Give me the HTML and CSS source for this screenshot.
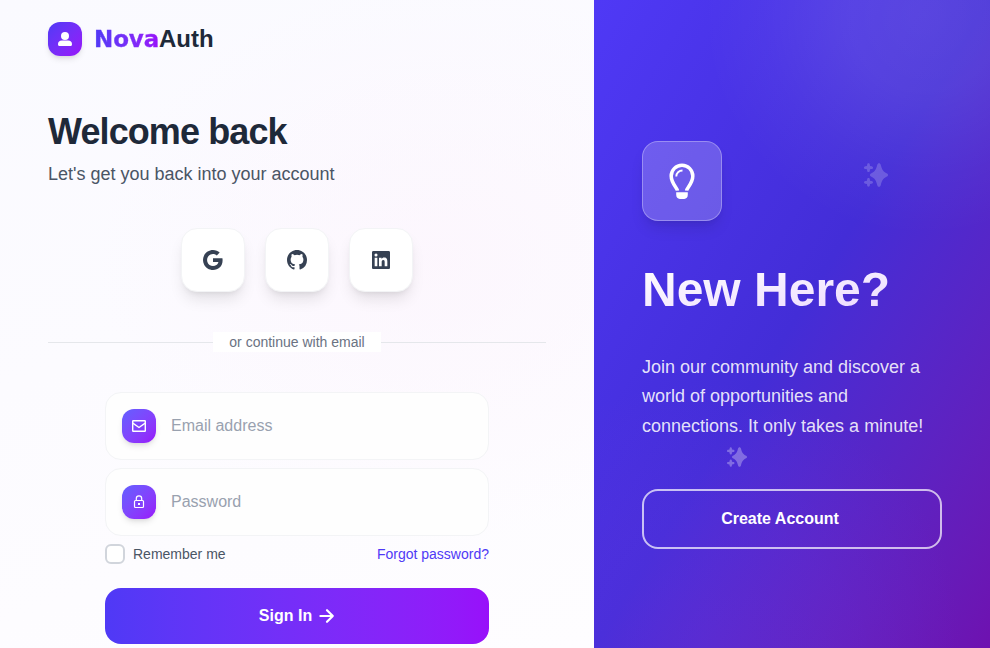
FILE: index.html
```html
<!DOCTYPE html>
<html lang="en">
<head>
<meta charset="utf-8">
<title>NovaAuth</title>
<link rel="stylesheet" href="styles.css">
</head>
<body>
<main class="page">
  <section class="login">
    <header class="brand">
      <span class="badge"><svg width="16" height="16" viewBox="0 0 16 16" fill="currentColor"><circle cx="8" cy="5" r="4"/><path d="M1 13.200C1 11 2.600 9.600 4.800 9.600h6.400c2.200 0 3.800 1.400 3.800 3.600 0 1.200-.5 1.800-1.600 1.800H2.600C1.500 15 1 14.400 1 13.200z"/></svg></span>
      <span class="wordmark"><span class="nova">Nova</span><span>Auth</span></span>
    </header>
    <h1>Welcome back</h1>
    <p class="subtitle">Let's get you back into your account</p>
    <div class="socials">
      <button aria-label="Google"><svg width="24" height="24" viewBox="0 0 24 24" fill="currentColor"><path d="M3.064 7.509C4.709 4.241 8.091 2 12 2c2.695 0 4.959.991 6.691 2.605l-2.868 2.868C14.786 6.482 13.468 5.977 12 5.977c-2.605 0-4.809 1.759-5.595 4.123-.2.600-.314 1.241-.314 1.900s.114 1.300.314 1.900c.786 2.364 2.990 4.123 5.595 4.123 1.345 0 2.491-.355 3.386-.955 1.060-.709 1.764-1.768 1.996-3.018H12v-3.868h9.418c.118.654.182 1.336.182 2.045 0 3.046-1.091 5.609-2.982 7.350C16.964 21.105 14.700 22 12 22c-3.909 0-7.291-2.241-8.936-5.509C2.386 15.141 2 13.614 2 12s.386-3.141 1.064-4.491z"/></svg></button>
      <button aria-label="GitHub"><svg width="24" height="24" viewBox="0 0 24 24" fill="currentColor"><path d="M12 2C6.475 2 2 6.475 2 12c0 4.425 2.862 8.162 6.838 9.487.5.088.687-.212.687-.475 0-.237-.012-1.025-.012-1.862C7 19.612 6.350 18.537 6.150 17.975c-.113-.288-.6-1.175-1.025-1.413-.35-.187-.85-.65-.012-.662.787-.012 1.350.725 1.537 1.025.9 1.512 2.338 1.087 2.912.825.088-.65.350-1.088.638-1.338-2.225-.25-4.550-1.112-4.550-4.937 0-1.088.387-1.988 1.025-2.688-.1-.25-.45-1.275.1-2.650 0 0 .837-.262 2.750 1.025a9.300 9.300 0 0 1 5 0c1.912-1.300 2.750-1.025 2.750-1.025.55 1.375.2 2.400.1 2.650.637.700 1.025 1.588 1.025 2.688 0 3.837-2.338 4.687-4.563 4.937.363.313.675.913.675 1.850V21.012c0 .263.188.575.688.475A10 10 0 0 0 22 12c0-5.525-4.475-10-10-10z"/></svg></button>
      <button aria-label="LinkedIn"><svg width="24" height="24" viewBox="0 0 24 24" fill="currentColor"><path fill-rule="evenodd" d="M18.336 18.339H15.671V14.162C15.671 13.166 15.650 11.885 14.282 11.885 12.892 11.885 12.680 12.968 12.680 14.089V18.339H10.014V9.750H12.575V10.921H12.609C12.967 10.246 13.837 9.533 15.137 9.533 17.837 9.533 18.337 11.311 18.337 13.624V18.339zM7.004 8.575A1.548 1.548 0 1 1 7.004 5.479 1.548 1.548 0 0 1 7.004 8.575zM8.340 18.339H5.667V9.750H8.340V18.339zM19.668 3H4.329C3.595 3 3 3.580 3 4.297V19.703C3 20.420 3.595 21 4.329 21H19.668C20.401 21 21 20.420 21 19.703V4.297C21 3.580 20.401 3 19.668 3z"/></svg></button>
    </div>
    <div class="divider"><span>or continue with email</span></div>
    <form>
      <label class="field">
        <span class="badge soft"><svg width="16" height="16" viewBox="0 0 16 16" fill="none" stroke="currentColor" stroke-width="1.400"><rect x="1.700" y="2.700" width="12.600" height="10.600" rx=".5"/><path d="M1.800 5.200 8 9.500l6.200-4.300"/></svg></span>
        <input type="text" placeholder="Email address">
      </label>
      <label class="field">
        <span class="badge soft"><svg width="16" height="16" viewBox="0 0 16 16" fill="none" stroke="currentColor" stroke-width="1.200"><rect x="3.500" y="6.500" width="9" height="7" rx="1"/><path d="M5.300 6.500V4.600a2.700 2.700 0 0 1 5.400 0v1.900"/><path d="M8 9v2" stroke-width="2"/></svg></span>
        <input type="password" placeholder="Password">
      </label>
      <div class="options">
        <label class="remember"><span class="check"></span>Remember me</label>
        <a>Forgot password?</a>
      </div>
      <button class="submit" type="button">Sign In<svg width="16" height="16" viewBox="0 0 16 16" fill="none" stroke="currentColor" stroke-width="2.200" stroke-linecap="round" stroke-linejoin="round"><path d="M1.400 8h12.400M8 2.200 13.800 8 8 13.800"/></svg></button>
    </form>
  </section>
  <aside class="promo">
    <svg class="spark spark-large" viewBox="0 0 24 24" fill="currentColor"><use href="#sparkles"/></svg>
    <svg class="spark spark-small" viewBox="0 0 24 24" fill="currentColor"><use href="#sparkles"/></svg>
    <div class="bulb"><svg width="40" height="40" viewBox="0 0 40 40" fill="none" stroke="currentColor"><path stroke-width="3.500" d="M15.400 29.600c-.3-2.900-6.200-7.300-6.200-14.600a10.800 10.800 0 0 1 21.600 0c0 7.300-5.900 11.700-6.200 14.600"/><path stroke-width="1.900" d="M14.300 15.400c0-3.200 2.600-5.900 6.200-5.900"/><path stroke="none" fill="currentColor" d="M14.200 31.300h11.600v2.500c0 2.300-1.400 4.200-3.600 4.200h-4.400c-2.200 0-3.600-1.900-3.600-4.200z"/></svg></div>
    <h2>New Here?</h2>
    <p>Join our community and discover a world of opportunities and connections. It only takes a minute!</p>
    <button class="create">Create Account</button>
  </aside>
</main>
<svg class="defs" width="0" height="0"><defs><g id="sparkles"><path d="M15 .2c.9 0 1.400.7 1.700 1.600C18.100 6.800 19 8.600 23 10.500c.7.300 1 .8 1 1.500s-.3 1.200-1 1.500c-4 1.900-4.900 3.700-6.300 8.700-.3.900-.8 1.600-1.700 1.600s-1.400-.7-1.700-1.600c-1.400-5-2.300-6.800-6.300-8.700-.7-.3-1-.8-1-1.500s.3-1.200 1-1.500c4-1.900 4.900-3.700 6.300-8.700C13.600.9 14.100.2 15 .2z"/><path id="plus" d="M4.500.3c.8 0 1.200.5 1.300 1.200l.2 1.600 1.600.2c.8.100 1.400.6 1.400 1.400s-.6 1.300-1.400 1.400L6 6.300l-.2 1.600c-.1.700-.5 1.200-1.300 1.200s-1.200-.5-1.300-1.200L3 6.300l-1.600-.2C.6 6 0 5.500 0 4.700s.6-1.300 1.400-1.400L3 3.100l.2-1.600C3.300.8 3.700.3 4.500.3z"/><use href="#plus" y="14.600"/></g></defs></svg>
</body>
</html>
```
FILE: styles.css
```css
* { box-sizing: border-box; }
body { margin: 0; font-family: "Liberation Sans", Arial, sans-serif; overflow: hidden; }
h1, h2, p { margin: 0; }
button, input { font: inherit; border: 0; padding: 0; }
svg { display: block; flex: none; }
.defs { position: absolute; }
.page { display: grid; grid-template-columns: 594px 396px; height: 648px; }

.login {
  padding: 22px 48px 0;
  background:
    radial-gradient(ellipse 340px 280px at 440px 260px, rgba(253, 242, 252, .5), rgba(253, 244, 253, 0)),
    linear-gradient(160deg, #fafaff 0%, #fcfbff 45%, #fefdff 100%);
}
.brand { display: flex; align-items: center; gap: 12px; height: 34px; }
.badge {
  width: 34px; height: 34px; border-radius: 12px; flex: none;
  display: flex; align-items: center; justify-content: center;
  color: #fff; background: linear-gradient(135deg in oklab, #4f39f6, #9810fa);
  box-shadow: 0 4px 6px -1px rgba(0, 0, 0, .1), 0 2px 4px -2px rgba(0, 0, 0, .1);
}
.badge.soft { background: linear-gradient(135deg in oklab, #615fff, #9810fa); }
.wordmark { display: flex; align-items: center; font-size: 24px; line-height: 32px; font-weight: 700; color: #1e2939; }
.nova {
  font-family: "DejaVu Sans", sans-serif; font-size: 23px; line-height: 32px;
  width: 65px; letter-spacing: -.1px; -webkit-text-stroke: .3px transparent;
  background: linear-gradient(90deg in oklab, #4f39f6, #9810fa);
  -webkit-background-clip: text; background-clip: text; color: transparent;
}
h1 { margin-top: 56px; font-size: 36px; line-height: 40px; letter-spacing: -.9px; color: #1e2939; }
.subtitle { margin-top: 8px; font-size: 18px; line-height: 28px; color: #4a5565; }
.socials { margin-top: 40px; display: flex; justify-content: center; gap: 20px; }
.socials button {
  width: 64px; height: 64px; border-radius: 16px; border: 1px solid #f3f4f6; background: #fff; color: #364153;
  display: flex; align-items: center; justify-content: center;
  box-shadow: 0 10px 15px -3px rgba(0, 0, 0, .1), 0 4px 6px -4px rgba(0, 0, 0, .1);
}
.divider { margin-top: 40px; height: 20px; display: flex; align-items: center; }
.divider::before, .divider::after { content: ""; flex: 1; height: 1px; background: #e5e7eb; }
.divider span { padding: 0 16px; background: #fff; font-size: 14px; line-height: 20px; color: #6a7282; }
form { width: 384px; margin: 40px auto 0; display: flex; flex-direction: column; gap: 8px; }
.field { height: 68px; padding: 0 16px; display: flex; align-items: center; gap: 15px; border: 1px solid #f3f4f6; border-radius: 16px; background: #fefefe; }
.field input { flex: 1; min-width: 0; background: none; outline: 0; font-size: 16px; line-height: 24px; }
.field input::placeholder { color: #99a1af; opacity: 1; }
.options { display: flex; align-items: center; justify-content: space-between; height: 20px; font-size: 14px; color: #4a5565; }
.options a { color: #4f39f6; }
.remember { display: flex; align-items: center; gap: 8px; }
.check { width: 20px; height: 20px; border: 2px solid #d1d5dc; border-radius: 6px; background: #fff; }
.submit {
  margin-top: 16px; height: 56px; border-radius: 16px; color: #fff; font-size: 16px; font-weight: 700;
  background: linear-gradient(90deg in oklab, #4f39f6, #9810fa);
  display: flex; align-items: center; justify-content: center; gap: 7px;
}

.promo {
  position: relative; overflow: hidden; padding: 141px 48px 0;
  background:
    radial-gradient(circle 220px at 330px 15px, rgba(255, 255, 255, .11) 0%, rgba(255, 255, 255, .09) 35%, rgba(255, 255, 255, .03) 72%, rgba(255, 255, 255, 0) 100%),
    radial-gradient(circle 260px at 110px 640px, rgba(173, 70, 255, .1) 0%, rgba(173, 70, 255, .07) 50%, rgba(173, 70, 255, 0) 100%),
    linear-gradient(to bottom right in oklab, #4f39f6, #432dd7 50%, #6e11b0);
}
.bulb {
  width: 80px; height: 80px; border: 1px solid rgba(255, 255, 255, .3); border-radius: 16px; color: #fff;
  background: rgba(255, 255, 255, .2); display: flex; align-items: center; justify-content: center;
  box-shadow: 0 10px 15px -3px rgba(0, 0, 0, .1), 0 4px 6px -4px rgba(0, 0, 0, .1);
}
h2 {
  margin-top: 45px; font-size: 48px; line-height: 48px;
  background: linear-gradient(to bottom right, #fff, #e9d4ff);
  -webkit-background-clip: text; background-clip: text; color: transparent;
}
.promo p { margin-top: 39px; font-size: 18px; line-height: 29.25px; color: rgba(255, 255, 255, .87); }
.create {
  margin-top: 48px; width: 100%; height: 60px; padding-right: 24px; border: 2px solid rgba(255, 255, 255, .7);
  border-radius: 16px; background: none; color: #fff; font-size: 16px; font-weight: 700;
}
.spark { position: absolute; color: rgba(255, 255, 255, .2); }
.spark-large { left: 270px; top: 163px; width: 24px; height: 24px; }
.spark-small { left: 133px; top: 447px; width: 20px; height: 20px; color: rgba(255, 255, 255, .3); }
```
